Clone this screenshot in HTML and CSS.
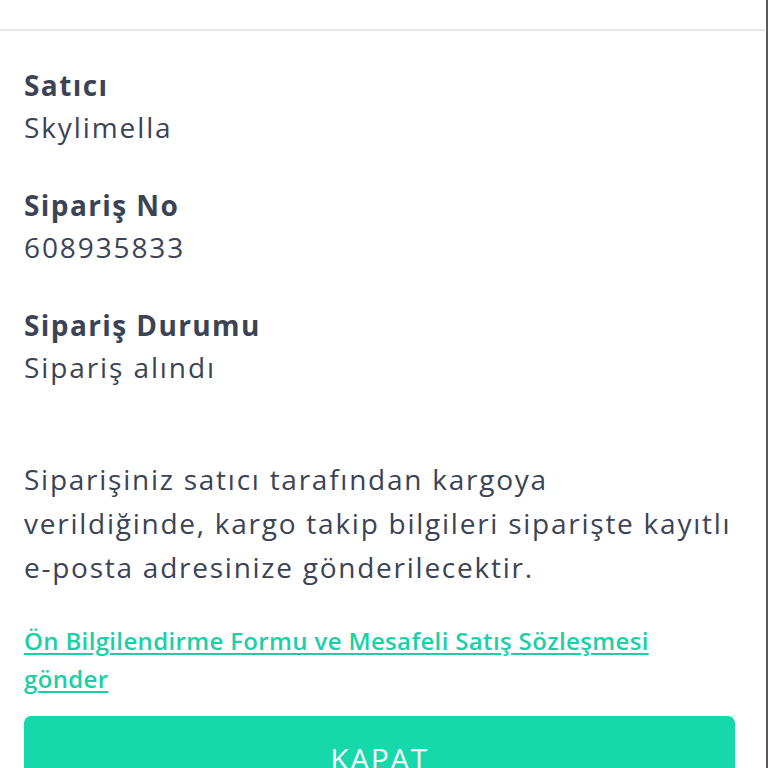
FILE: index.html
```html
<!DOCTYPE html>
<html lang="tr">
<head>
<meta charset="utf-8">
<link rel="stylesheet" href="styles.css">
</head>
<body>
<div class="page">
  <div class="header"></div>
  <div class="content">
    <div class="field">
      <div class="label">Satıcı</div>
      <div class="value">Skylimella</div>
    </div>
    <div class="field">
      <div class="label">Sipariş No</div>
      <div class="value">608935833</div>
    </div>
    <div class="field">
      <div class="label">Sipariş Durumu</div>
      <div class="value">Sipariş alındı</div>
    </div>
    <p class="note">Siparişiniz satıcı tarafından kargoya<br>verildiğinde, kargo takip bilgileri siparişte kayıtlı<br>e-posta adresinize gönderilecektir.</p>
    <a class="link" href="#">Ön Bilgilendirme Formu ve Mesafeli Satış Sözleşmesi<br>gönder</a>
    <button class="btn">KAPAT</button>
  </div>
</div>
</body>
</html>
```
FILE: styles.css
```css
html, body {
  margin: 0;
  padding: 0;
  background: #fff;
}
.page {
  width: 766px;
  height: 768px;
  border-right: 2px solid #5a5a5a;
  overflow: hidden;
  font-family: "Open Sans", "Noto Sans", sans-serif;
  color: #3b4354;
}
.header {
  height: 29px;
  border-bottom: 2px solid #e6e6e6;
  margin-right: 1px;
}
.content {
  padding: 33px 32px 0 24px;
  display: flex;
  flex-direction: column;
  align-items: flex-start;
}
.field {
  margin-bottom: 36px;
}
.field:last-of-type {
  margin-bottom: 0;
}
.label {
  font-size: 28px;
  line-height: 42px;
  font-weight: 700;
  letter-spacing: 1.4px;
}
.value {
  font-size: 28px;
  line-height: 42px;
  letter-spacing: 1.9px;
}
.note {
  margin: 69px 0 0;
  font-size: 28px;
  line-height: 44px;
  letter-spacing: 1.75px;
}
.link {
  margin-top: 33px;
  font-size: 24px;
  line-height: 38px;
  font-weight: 600;
  color: #1ccfa6;
  text-decoration: underline;
  text-underline-offset: 3px;
  letter-spacing: 0.35px;
}
.btn {
  margin-top: 18px;
  width: 711px;
  height: 84px;
  border: none;
  border-radius: 7px;
  background: #17d8aa;
  color: #fff;
  font-family: inherit;
  font-size: 30px;
  font-weight: 500;
  letter-spacing: 1.5px;
  padding: 0;
  cursor: pointer;
}
```
